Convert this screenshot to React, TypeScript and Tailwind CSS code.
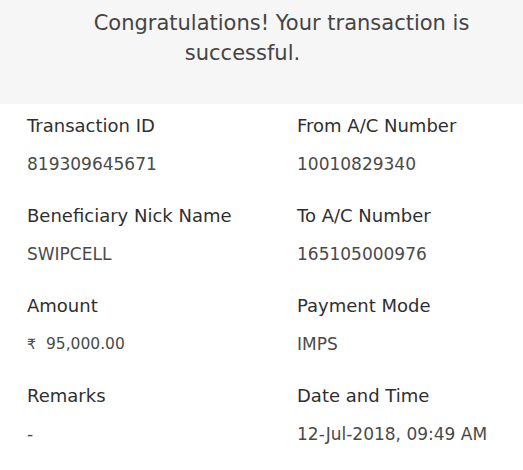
import { Fragment, ReactNode } from "react";

const rows: [string, ReactNode, string, ReactNode][] = [
  ["Transaction ID", "819309645671", "From A/C Number", "10010829340"],
  ["Beneficiary Nick Name", "SWIPCELL", "To A/C Number", "165105000976"],
  [
    "Amount",
    <span className="flex items-baseline">
      <span className="text-[14px]">₹</span>
      <span className="ml-[10px] text-[15.5px]">95,000.00</span>
    </span>,
    "Payment Mode",
    "IMPS",
  ],
  ["Remarks", "-", "Date and Time", "12-Jul-2018, 09:49 AM"],
];

function Field({ label, value }: { label: string; value: ReactNode }) {
  return (
    <div className="flex flex-col">
      <div className="text-[18px] leading-[24px] text-[#2f2f2f]">{label}</div>
      <div className="mt-[14px] h-[24px] text-[17px] leading-[24px] text-[#4a4a4a]">{value}</div>
    </div>
  );
}

export default function App() {
  return (
    <div className="w-[523px] h-[470px] bg-white overflow-hidden font-['DejaVu_Sans',sans-serif]">
      <div className="h-[104px] bg-[#f6f6f6] pt-[8px]">
        <p className="ml-[85px] w-[393px] text-center text-[21px] leading-[30px] text-[#444]">
          <span className="block">Congratulations! Your transaction is</span>
          <span className="block pr-[78px]">successful.</span>
        </p>
      </div>
      <div className="grid grid-cols-[270px_1fr] gap-y-[28px] pl-[27px] pt-[10px]">
        {rows.map(([l1, v1, l2, v2]) => (
          <Fragment key={l1}>
            <Field label={l1} value={v1} />
            <Field label={l2} value={v2} />
          </Fragment>
        ))}
      </div>
    </div>
  );
}
